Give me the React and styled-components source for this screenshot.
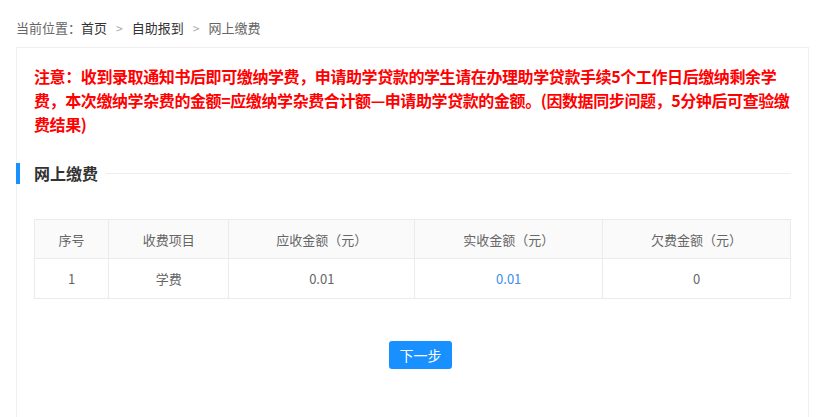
import React from 'react'
import styled, { createGlobalStyle } from 'styled-components'

const GlobalStyle = createGlobalStyle`
  body {
    margin: 0;
    background: #fff;
    font-family: "Noto Sans CJK SC", "Noto Sans", sans-serif;
    color: #333;
  }
`

const Breadcrumb = styled.div`
  display: flex;
  align-items: center;
  height: 40px;
  margin-top: 7px;
  padding-left: 16px;
  font-size: 13px;
  color: #666;
`

const Crumb = styled.span`
  color: ${p => (p.current ? '#666' : '#333')};
`

const Sep = styled.span`
  color: #aaa;
  font-size: 12px;
  margin: 0 9px;
`

const Card = styled.div`
  margin: 0 22px 0 16px;
  height: 370px;
  box-sizing: border-box;
  border: 1px solid #f0f0f0;
  border-bottom: none;
  padding: 16px 17px 0;
`

const Notice = styled.p`
  margin: 0;
  color: #ff0000;
  font-size: 16px;
  font-weight: 700;
  line-height: 24px;
  letter-spacing: -0.4px;
`

const SectionHead = styled.div`
  display: flex;
  align-items: center;
  height: 21px;
  margin: 27px 0 0 -18px;
`

const Bar = styled.span`
  width: 4px;
  height: 21px;
  background: #1890ff;
  margin-right: 14px;
`

const SectionTitle = styled.h3`
  margin: 0;
  font-size: 16px;
  font-weight: 700;
  color: #333;
  line-height: 21px;
`

const Rule = styled.span`
  flex: 1;
  height: 1px;
  background: #eee;
  margin-left: 8px;
`

const Table = styled.table`
  width: 100%;
  margin-top: 35px;
  border-collapse: collapse;
  table-layout: fixed;
  font-size: 13px;
  color: #666;
`

const Th = styled.th`
  height: 38px;
  padding: 0;
  font-weight: 400;
  background: #fafafa;
  border: 1px solid #ebebeb;
`

const Td = styled.td`
  height: 39px;
  padding: 0;
  text-align: center;
  border: 1px solid #ebebeb;
  color: ${p => (p.link ? '#3a8ee6' : '#666')};
`

const Actions = styled.div`
  display: flex;
  justify-content: center;
  padding-left: 16px;
  margin-top: 42px;
`

const Button = styled.button`
  width: 63px;
  height: 28px;
  border: none;
  border-radius: 3px;
  background: #1890ff;
  color: #fff;
  font-family: inherit;
  font-size: 14px;
  padding: 0;
  cursor: pointer;
  :focus {
    outline: none;
  }
`

const columns = [
  { title: '序号', w: '9.8%' },
  { title: '收费项目', w: '15.9%' },
  { title: '应收金额（元）', w: '24.6%' },
  { title: '实收金额（元）', w: '24.85%' },
  { title: '欠费金额（元）', w: '24.85%' },
]

const rows = [{ no: 1, item: '学费', due: '0.01', paid: '0.01', owed: '0' }]

const App = () => {
  return (
    <>
      <GlobalStyle />
      <Breadcrumb>
        <span>当前位置：</span>
        <Crumb>首页</Crumb>
        <Sep>&gt;</Sep>
        <Crumb>自助报到</Crumb>
        <Sep>&gt;</Sep>
        <Crumb current>网上缴费</Crumb>
      </Breadcrumb>
      <Card>
        <Notice>
          注意：收到录取通知书后即可缴纳学费，申请助学贷款的学生请在办理助学贷款手续5个工作日后缴纳剩余学费，本次缴纳学杂费的金额=应缴纳学杂费合计额—申请助学贷款的金额。(因数据同步问题，5分钟后可查验缴费结果)
        </Notice>
        <SectionHead>
          <Bar />
          <SectionTitle>网上缴费</SectionTitle>
          <Rule />
        </SectionHead>
        <Table>
          <colgroup>
            {columns.map(c => (
              <col key={c.title} style={{ width: c.w }} />
            ))}
          </colgroup>
          <thead>
            <tr>
              {columns.map(c => (
                <Th key={c.title}>{c.title}</Th>
              ))}
            </tr>
          </thead>
          <tbody>
            {rows.map(r => (
              <tr key={r.no}>
                <Td>{r.no}</Td>
                <Td>{r.item}</Td>
                <Td>{r.due}</Td>
                <Td link>{r.paid}</Td>
                <Td>{r.owed}</Td>
              </tr>
            ))}
          </tbody>
        </Table>
        <Actions>
          <Button>下一步</Button>
        </Actions>
      </Card>
    </>
  )
}

export default App
